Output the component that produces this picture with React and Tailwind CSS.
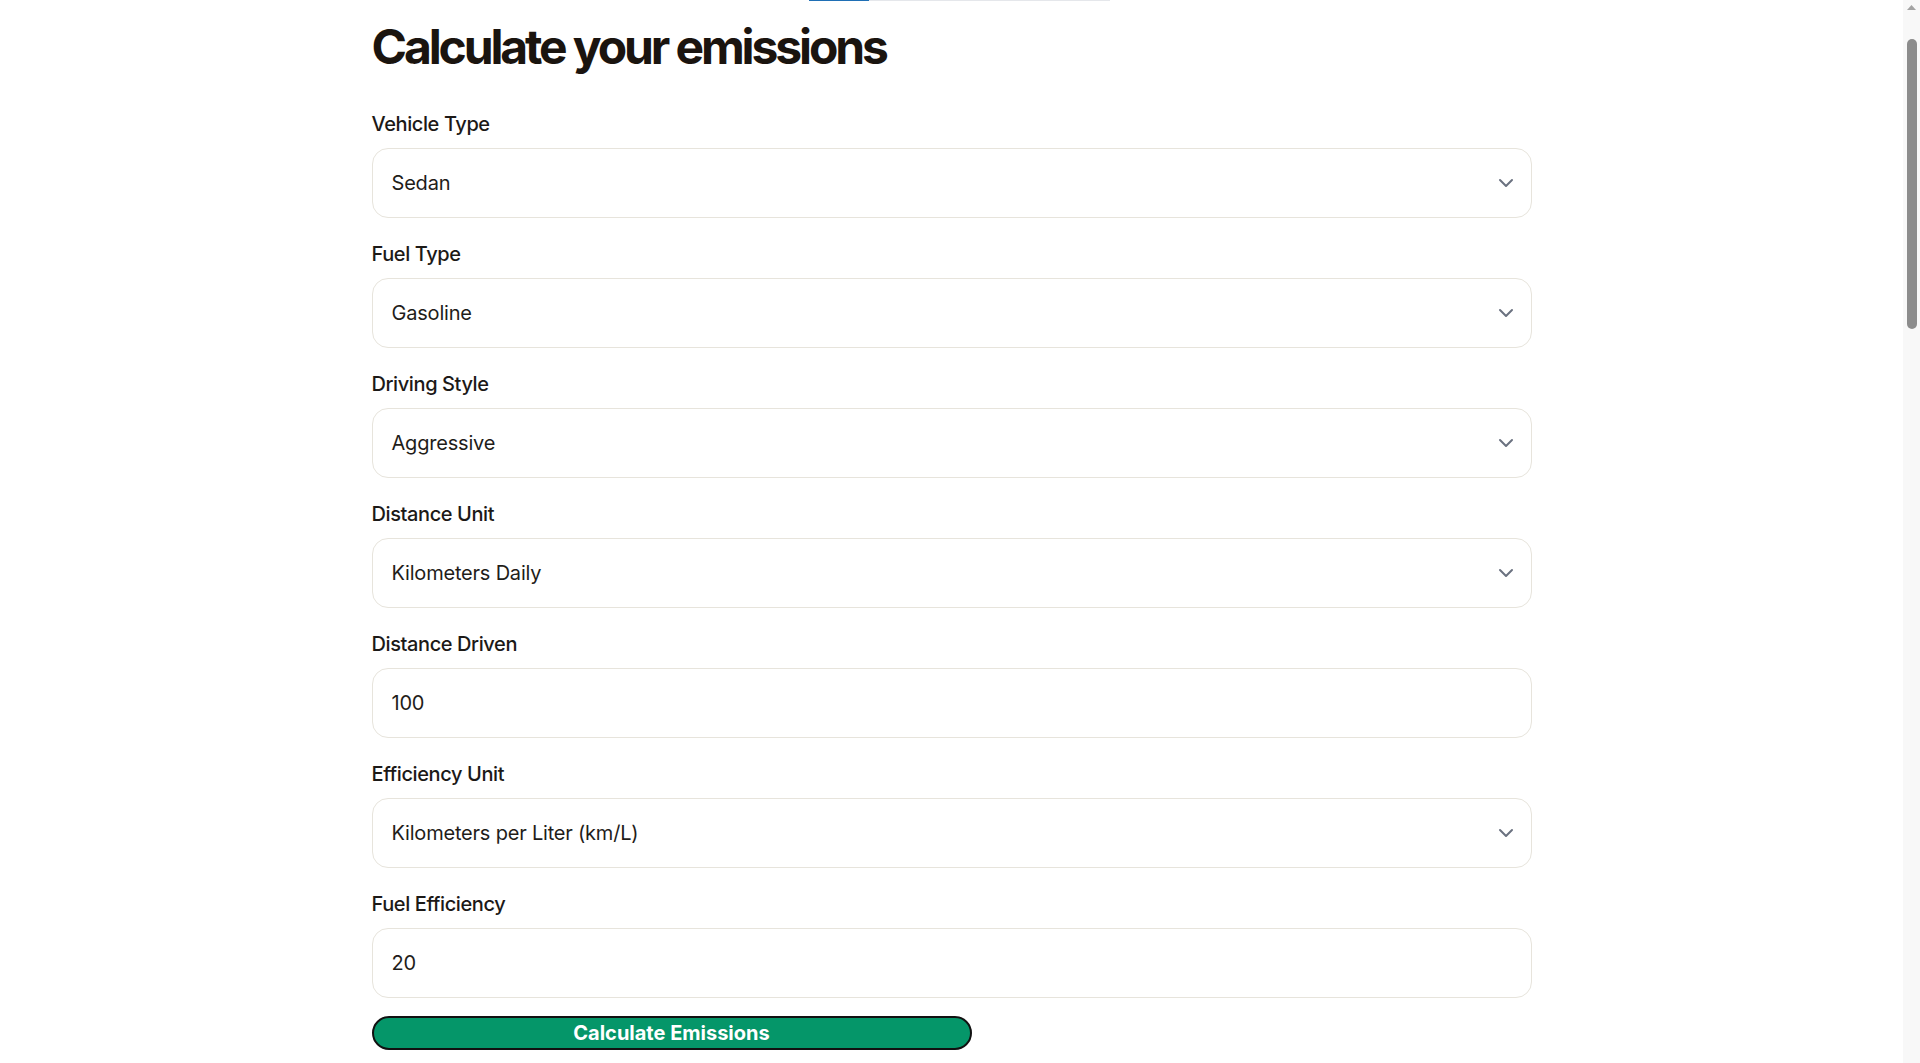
import React from "react";
import { ChevronDown } from "lucide-react";

const fields = [
  { label: "Vehicle Type", value: "Sedan", select: true },
  { label: "Fuel Type", value: "Gasoline", select: true },
  { label: "Driving Style", value: "Aggressive", select: true },
  { label: "Distance Unit", value: "Kilometers Daily", select: true },
  { label: "Distance Driven", value: "100", select: false },
  { label: "Efficiency Unit", value: "Kilometers per Liter (km/L)", select: true },
  { label: "Fuel Efficiency", value: "20", select: false },
];

function Field({ label, value, select }) {
  return (
    <div className="flex flex-col">
      <label className="text-[20px] leading-[28px] font-medium text-[#1c1917] tracking-[-0.02em] mb-2.5">
        {label}
      </label>
      <div className="h-[70px] flex items-center justify-between pl-[19px] pr-[13px] bg-white border border-[#e7e4dc] rounded-2xl">
        <span className="text-[20px] text-[#1f1d1a] tracking-[-0.01em]">{value}</span>
        {select && <ChevronDown size={24} strokeWidth={2} className="text-[#6b7280]" />}
      </div>
    </div>
  );
}

// fake browser scrollbar, the reference shows a classic one
function Scrollbar() {
  return (
    <div className="w-[17px] shrink-0 bg-[#f8f8f8] flex flex-col items-center">
      <div className="h-[15px] flex items-center justify-center">
        <svg width="9" height="5" viewBox="0 0 9 5">
          <path d="M0 5 L4.5 0 L9 5 Z" fill="#a3a3a3" />
        </svg>
      </div>
      <div className="mt-[24px] w-[10px] h-[290px] rounded-full bg-[#8c8c8c]" />
    </div>
  );
}

export default function App() {
  return (
    <div className="h-screen flex overflow-hidden bg-white font-['Inter',sans-serif]">
      <main className="flex-1 overflow-hidden">
        <div className="w-[1160px] mx-auto">
          <div className="ml-[437px] w-[301px] h-px flex">
            <div className="w-[60px] bg-[#1f6fb5]" />
            <div className="flex-1 bg-[#e5e7eb]" />
          </div>
          <h1 className="pt-[22px] text-5xl leading-none font-bold tracking-[-0.065em] text-[#1a140f] mb-[39px]">
            Calculate your emissions
          </h1>
          <form className="flex flex-col gap-[22px]" onSubmit={(e) => e.preventDefault()}>
            {fields.map((f) => (
              <Field key={f.label} {...f} />
            ))}
          </form>
          <button className="mt-[18px] w-[600px] h-[34px] rounded-full border-2 border-[#111] bg-[#059669] text-white font-bold text-xl flex items-center justify-center">
            Calculate Emissions
          </button>
        </div>
      </main>
      <Scrollbar />
    </div>
  );
}
